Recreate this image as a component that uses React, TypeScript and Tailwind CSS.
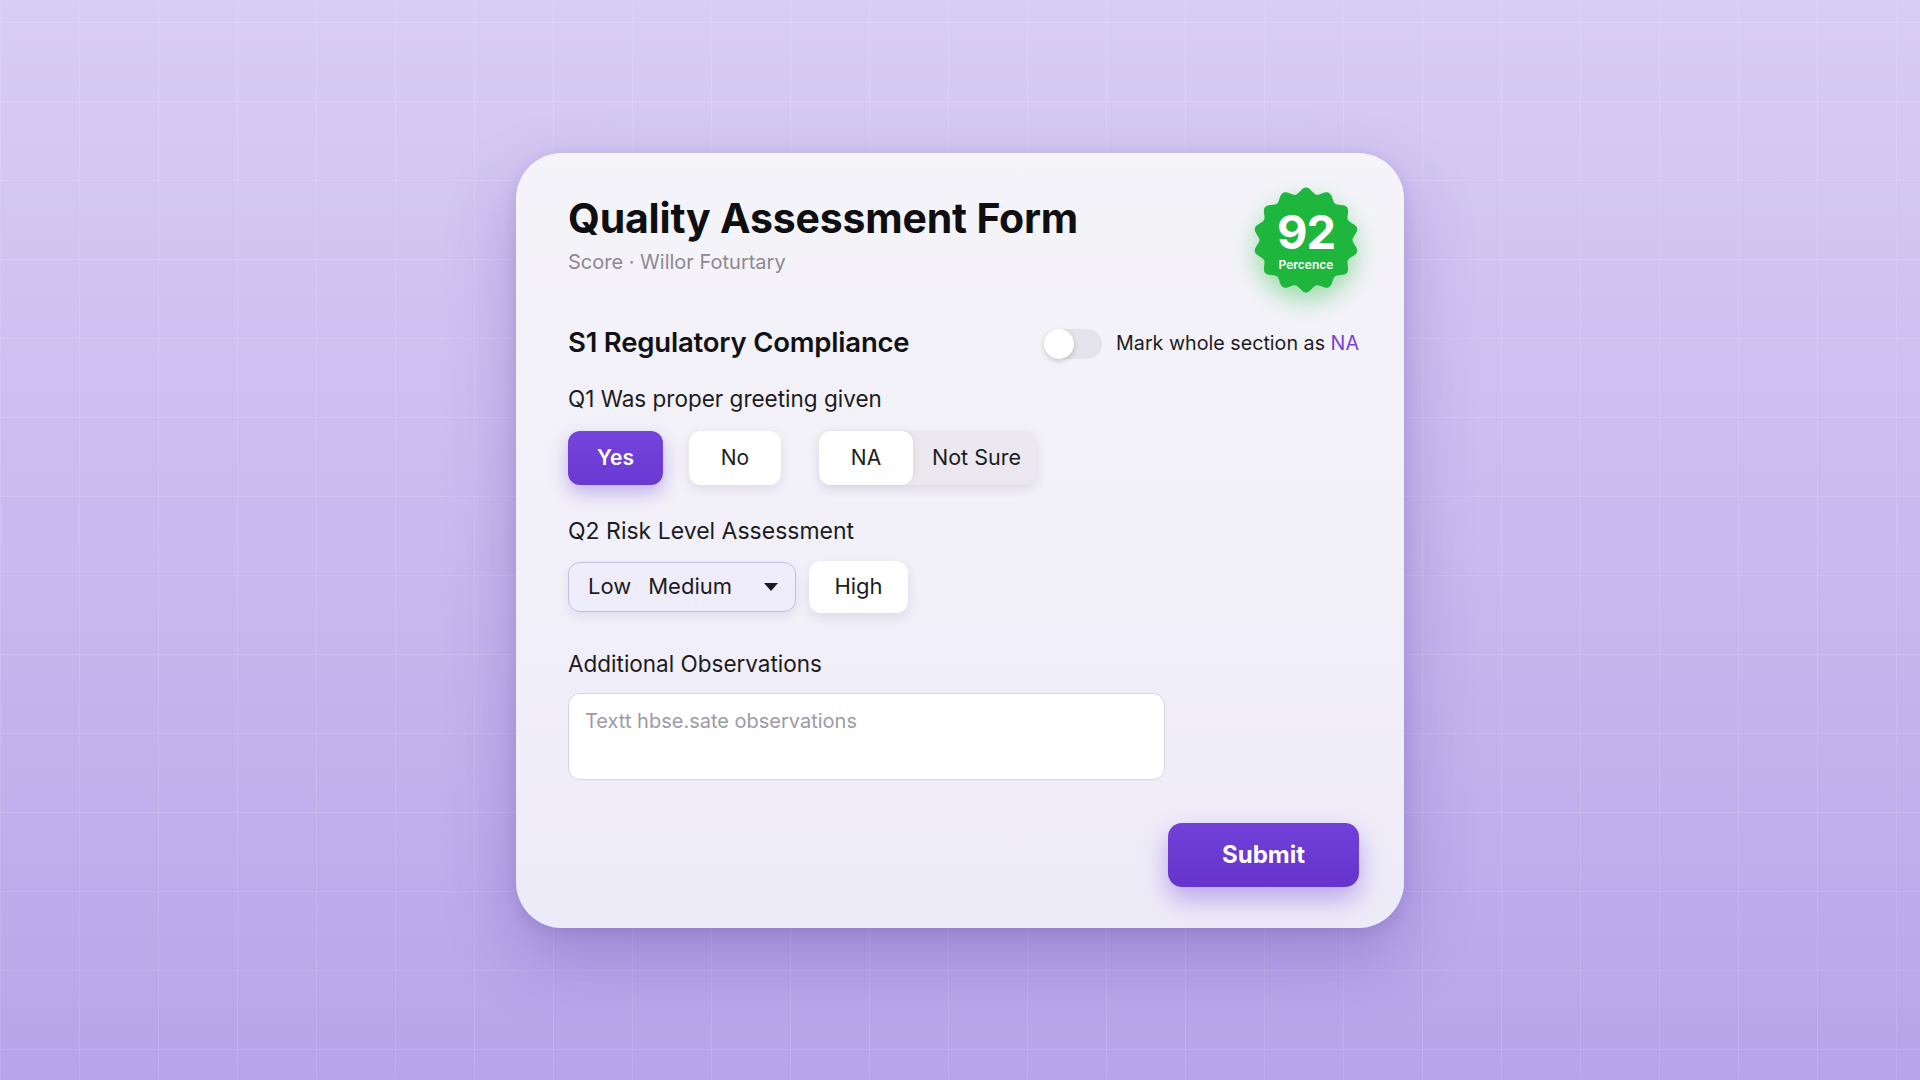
import React from "react";

const font = { fontFamily: "Inter, 'Noto Sans', sans-serif" };

function scallopPath(cx: number, cy: number, r: number, amp: number, bumps: number) {
  const steps = 192;
  let d = "";
  for (let i = 0; i <= steps; i++) {
    const t = (i / steps) * Math.PI * 2;
    const rr = r + amp * Math.cos(bumps * t);
    const x = cx + rr * Math.cos(t - Math.PI / 2);
    const y = cy + rr * Math.sin(t - Math.PI / 2);
    d += `${i === 0 ? "M" : "L"}${x.toFixed(2)} ${y.toFixed(2)} `;
  }
  return d + "Z";
}

function ScoreBadge() {
  return (
    <div className="absolute right-0 top-[-8px] w-[106px] h-[106px] flex items-center justify-center">
      <svg
        width="106"
        height="106"
        viewBox="0 0 106 106"
        className="absolute inset-0 drop-shadow-[0_10px_12px_rgba(40,190,70,0.45)]"
      >
        <path d={scallopPath(53, 53, 49.5, 3, 14)} fill="#1fb63d" />
      </svg>
      <div className="relative flex flex-col items-center text-white mt-[2px]">
        <span className="text-[47px] leading-[46px] font-bold tracking-[-1px]">92</span>
        <span className="text-[12px] leading-[14px] font-semibold mt-[3px]">Percence</span>
      </div>
    </div>
  );
}

function Toggle() {
  return (
    <div className="relative w-[56px] h-[30px] rounded-full bg-[#e4e2ea]">
      <div className="absolute left-[-2px] top-0 w-[30px] h-[30px] rounded-full bg-white shadow-[0_2px_5px_rgba(0,0,0,0.18)]" />
    </div>
  );
}

export default function App() {
  return (
    <div
      className="relative h-screen w-full overflow-hidden bg-[linear-gradient(180deg,#d8cdf4_0%,#c9baef_50%,#b7a4e9_100%)] flex items-center justify-center"
      style={font}
    >
      <div className="absolute inset-0 bg-[linear-gradient(to_right,rgba(255,255,255,0.11)_1px,transparent_1px),linear-gradient(to_bottom,rgba(255,255,255,0.11)_1px,transparent_1px)] bg-[size:79px_79px] bg-[position:0px_22px]" />

      <div className="relative w-[888px] h-[775px] rounded-[46px] bg-[linear-gradient(180deg,#f5f4f9_0%,#f1eff8_60%,#eeebf8_100%)] shadow-[0_30px_70px_rgba(70,40,150,0.28),0_4px_14px_rgba(70,40,150,0.12)] pt-[42px] pl-[52px] pr-[45px] pb-[41px] flex flex-col">
        {/* header */}
        <div className="relative">
          <h1 className="text-[41px] leading-[46px] font-bold text-[#0f0f12] tracking-[-0.2px]">
            Quality Assessment Form
          </h1>
          <p className="mt-[8px] text-[20px] leading-[26px] text-[#8b8a93]">Score · Willor Foturtary</p>
          <ScoreBadge />
        </div>

        {/* section */}
        <div className="mt-[50px] h-[34px] flex items-center justify-between">
          <h2 className="text-[27.5px] leading-[34px] font-semibold text-[#121216] tracking-[-0.2px]">
            S1 Regulatory Compliance
          </h2>
          <div className="flex items-center gap-[14px] mt-[4px]">
            <Toggle />
            <span className="text-[19.7px] text-[#1c1c22]">
              Mark whole section as <span className="text-[#7a3fd0]">NA</span>
            </span>
          </div>
        </div>

        {/* Q1 */}
        <p className="mt-[25px] text-[22.5px] leading-[30px] text-[#1c1c22]">Q1 Was proper greeting given</p>
        <div className="mt-[17px] flex items-center">
          <button className="w-[95px] h-[54px] rounded-[12px] bg-[linear-gradient(180deg,#7444dc,#6a38d2)] text-white text-[21px] font-semibold shadow-[0_8px_18px_rgba(108,59,214,0.35)]">
            Yes
          </button>
          <button className="ml-[26px] w-[92px] h-[54px] rounded-[12px] bg-white text-[21px] text-[#1c1c22] shadow-[0_4px_12px_rgba(60,40,110,0.1)]">
            No
          </button>
          <div className="ml-[38px] flex h-[54px] rounded-[12px] bg-[#ebe9ef] shadow-[0_4px_12px_rgba(60,40,110,0.12)]">
            <button className="w-[94px] h-[54px] rounded-[12px] bg-white text-[21px] text-[#1c1c22] shadow-[2px_0_6px_rgba(0,0,0,0.05)]">
              NA
            </button>
            <button className="w-[123px] h-[54px] pl-[4px] text-[21.5px] text-[#1c1c22]">Not Sure</button>
          </div>
        </div>

        {/* Q2 */}
        <p className="mt-[31px] text-[23px] leading-[30px] text-[#1c1c22]">Q2 Risk Level Assessment</p>
        <div className="mt-[15px] h-[52px] flex items-center">
          <div className="w-[228px] h-[50px] rounded-[12px] bg-[#efecfb] border-[1.5px] border-[#c5bde6] flex items-center pl-[19px] pr-[16px] shadow-[0_4px_10px_rgba(60,40,110,0.08)]">
            <span className="text-[22px] text-[#1c1c22]">Low</span>
            <span className="ml-[17px] text-[22px] text-[#1c1c22]">Medium</span>
            <svg width="16" height="10" viewBox="0 0 16 10" className="ml-auto">
              <path d="M1 1h14l-7 8z" fill="#1a1a1f" />
            </svg>
          </div>
          <button className="ml-[13px] w-[99px] h-[52px] rounded-[12px] bg-white text-[22px] text-[#1c1c22] shadow-[0_4px_12px_rgba(60,40,110,0.1)]">
            High
          </button>
        </div>

        {/* observations */}
        <p className="mt-[36px] text-[22.5px] leading-[30px] text-[#1c1c22]">Additional Observations</p>
        <div className="mt-[14px] w-[597px] h-[87px] rounded-[12px] bg-white border-[1.5px] border-[#d5d3dc] px-[16px] pt-[12px]">
          <span className="text-[20px] text-[#9c9ba4]">Textt hbse.sate observations</span>
        </div>

        <div className="mt-[43px] flex justify-end">
          <button className="w-[191px] h-[64px] rounded-[14px] bg-[linear-gradient(180deg,#7040d8,#6634cc)] text-white text-[24px] font-bold shadow-[0_12px_26px_rgba(108,59,214,0.4)]">
            Submit
          </button>
        </div>
      </div>
    </div>
  );
}
